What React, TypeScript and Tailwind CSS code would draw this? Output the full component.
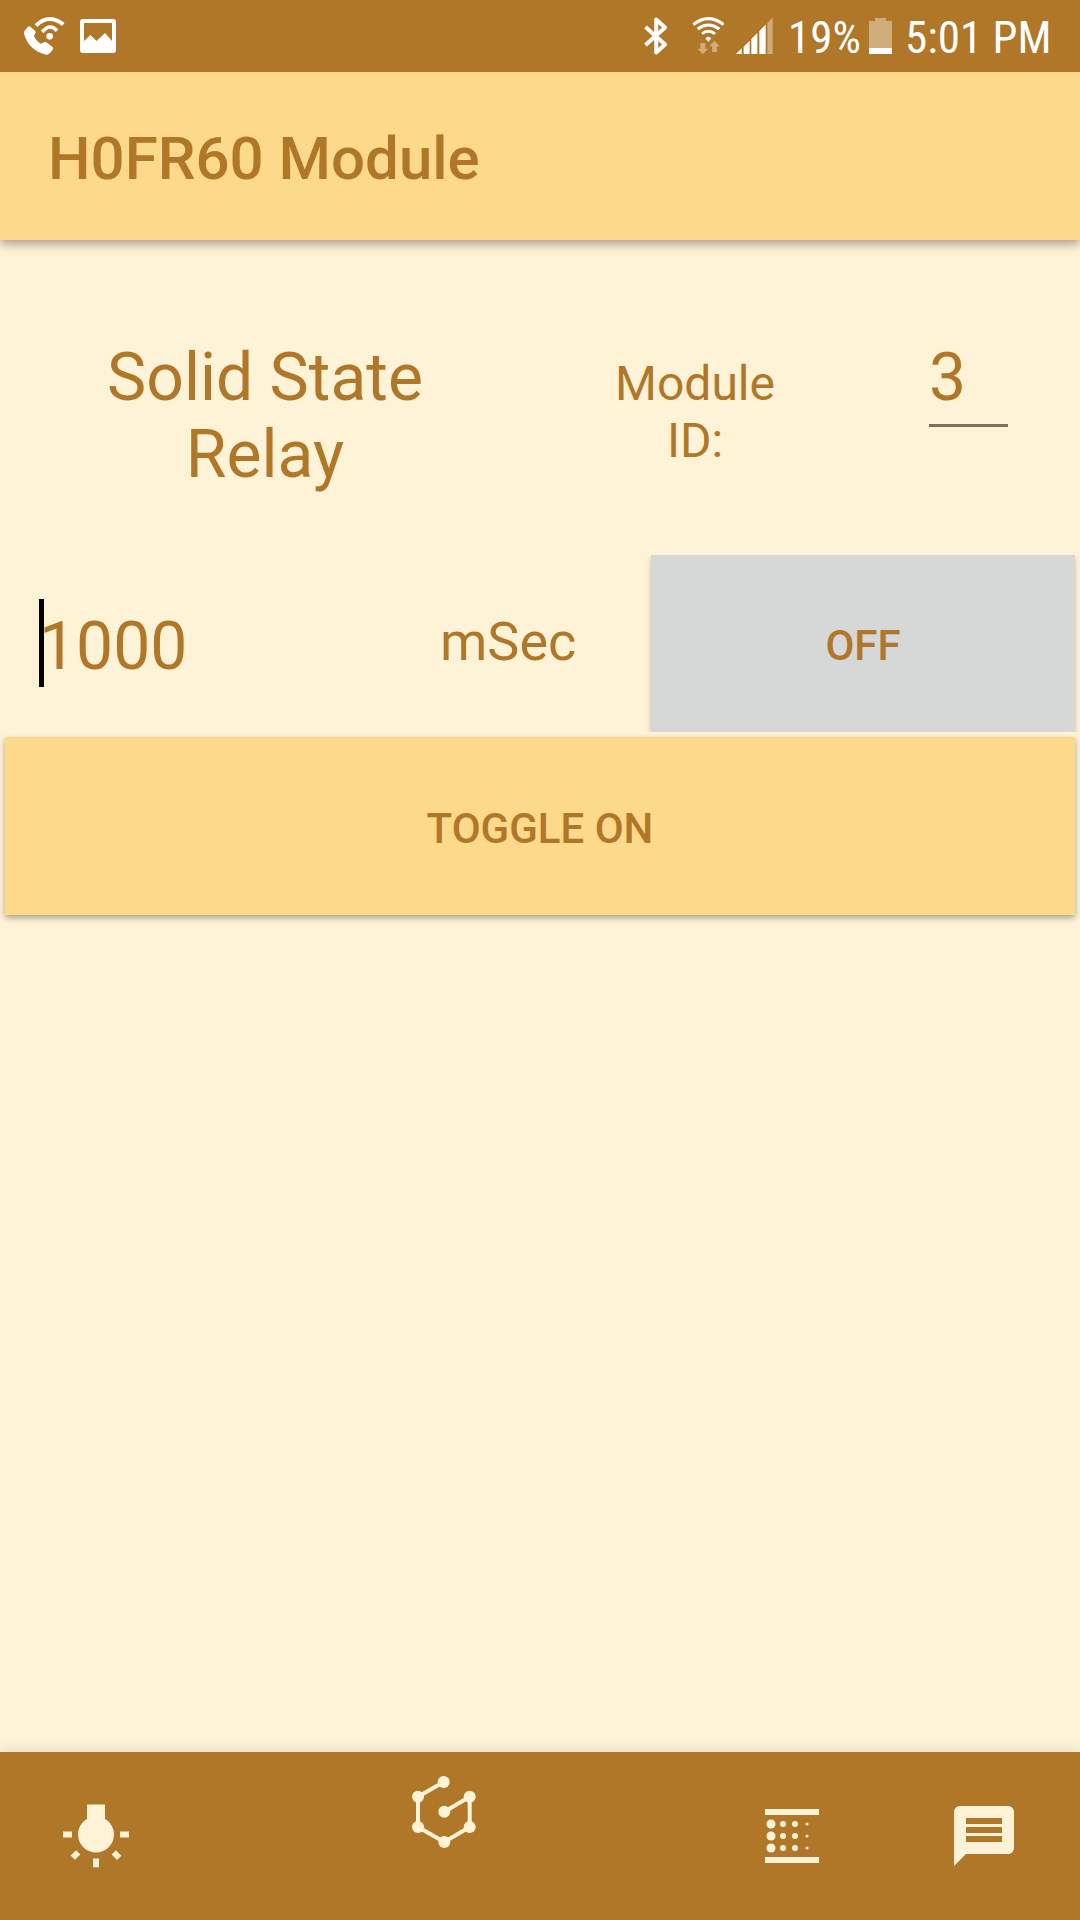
import { MdMessage } from "react-icons/md";

function CallIcon() {
  return (
    <svg className="mt-4 h-10 w-[42px]" viewBox="69 48 126 120" fill="none">
      <path
        d="M72 101 Q71 95 76 89 L84 80 Q88 77 92 81 L105 92 Q109 96 106 100 L102 107 Q107 121 122 131 L132 127 Q137 125 141 128 L157 140 Q162 145 158 149 L150 159 Q143 166 134 163 Q85 148 72 101Z"
        fill="#fff"
      />
      <circle cx="149" cy="109" r="10" fill="#fff" />
      <path d="M127 96 Q149 68 171 92" stroke="#fff" strokeWidth="11" />
      <path d="M108 77 Q145 39 190 73" stroke="#fff" strokeWidth="12" />
    </svg>
  );
}

function PictureIcon() {
  return (
    <svg className="mt-[19px] ml-[15px] h-[34px] w-9" viewBox="0 0 36 34">
      <path
        fillRule="evenodd"
        fill="#fff"
        d="M3 0H33Q36 0 36 3V31Q36 34 33 34H3Q0 34 0 31V3Q0 0 3 0ZM4 4V22L10.5 16L16.5 22L25 14L32 22V4Z"
      />
    </svg>
  );
}

function BluetoothIcon() {
  return (
    <svg className="mt-[17px] h-[38px] w-6" viewBox="0 0 24 38" fill="none">
      <path
        d="M1.5 10L21 27.5L12.2 35.5V2.5L21 10.5L1.5 28"
        stroke="#fff"
        strokeWidth="4"
        strokeLinejoin="round"
      />
    </svg>
  );
}

function WifiIcon() {
  return (
    <svg className="mt-4 ml-6 h-[39px] w-8" viewBox="216 48 96 117" fill="none">
      <path d="M220 74Q265 38 311 74" stroke="#fff" strokeWidth="9" />
      <path d="M233 87Q265 63 298 87" stroke="#fff" strokeWidth="9" />
      <path d="M246 101Q265 87 285 101" stroke="#fff" strokeWidth="9" />
      <path d="M256 115Q265 106 274 115L265 126Z" fill="#fff" />
      <path d="M241 129H256V146H265L248.500 163L232 146H241ZM276 156H291V139H299L283.500 122L267 139H276Z" fill="#d0ac7a" />
    </svg>
  );
}

function SignalIcon() {
  return (
    <svg className="mt-[18px] ml-3 h-9 w-[37px]" viewBox="349 54 111 108">
      <path d="M349 162L366 145V162ZM372 140L390 122V162H372ZM395 117L413 99V162H395ZM419 93L438 74V162H419Z" fill="#fff" />
      <path d="M443 69L459 53V162H443Z" fill="#d0ac7a" />
    </svg>
  );
}

function BatteryIcon() {
  return (
    <svg className="mt-[18px] h-9 w-[23px]" viewBox="0 0 23 36">
      <path d="M6 0H17V3H23V36H0V3H6Z" fill="#d0ac7a" />
      <path d="M0 30H23V36H0Z" fill="#fff" />
    </svg>
  );
}

function StatusBar() {
  return (
    <div className="relative z-10 flex h-[72px] items-start bg-[#b17728] pl-[23px] font-stretch-condensed text-[45px] leading-[75px] whitespace-nowrap text-white">
      <CallIcon />
      <PictureIcon />
      <div className="w-[528px]" />
      <BluetoothIcon />
      <WifiIcon />
      <SignalIcon />
      <span className="ml-[15px] w-[81px]">19%</span>
      <BatteryIcon />
      <span className="ml-[13px]">5:01 PM</span>
    </div>
  );
}

function BulbIcon() {
  return (
    <svg className="size-[72px]" viewBox="0 0 24 24" fill="currentColor">
      <path d="M3.550 18.540l1.410 1.410 1.800-1.790-1.410-1.410-1.800 1.790zM11 22.450h2V19.500h-2v2.950zM4 10.500H1v2h3v-2zm11-4.190V1.500H9v4.810C7.210 7.350 6 9.280 6 11.500c0 3.310 2.690 6 6 6s6-2.690 6-6c0-2.220-1.210-4.150-3-5.190zm5 4.190v2h3v-2h-3zm-2.760 7.660l1.790 1.800 1.410-1.410-1.800-1.790-1.400 1.400z" />
    </svg>
  );
}

const nodes = [
  [35.7, 6],
  [10, 20.7],
  [10, 51],
  [36.3, 66],
  [61.7, 51],
  [61.7, 20.7],
  [36.3, 35.7],
];

function HexagonIcon() {
  return (
    <svg className="size-[72px]" viewBox="0 0 72 72" fill="currentColor">
      <polyline points={nodes.join(" ")} fill="none" stroke="currentColor" strokeWidth="4" />
      {nodes.map(([x, y]) => (
        <circle key={`${x}-${y}`} cx={x} cy={y} r="6" />
      ))}
    </svg>
  );
}

function BlurIcon() {
  return (
    <svg className="size-[72px]" viewBox="0 0 24 24" fill="currentColor">
      <path d="M3 3h18v2H3zM3 19h18v2H3z" />
      {[8, 12, 16].map((y) => (
        <g key={y}>
          <circle cx="5" cy={y} r="1.5" />
          <circle cx="9" cy={y} r="1" />
          <circle cx="13" cy={y} r="1" />
          <circle cx="17" cy={y} r="0.5" />
        </g>
      ))}
    </svg>
  );
}

function BottomNav() {
  return (
    <nav className="flex h-[168px] items-start bg-[#b17728] pt-12 pl-[60px] text-[#fef2d7] shadow-[0_0_14px_rgba(0,0,0,0.12)]">
      <BulbIcon />
      <div className="-mt-6 ml-[276px]">
        <HexagonIcon />
      </div>
      <div className="ml-[276px]">
        <BlurIcon />
      </div>
      <MdMessage className="ml-[120px] size-[72px]" />
    </nav>
  );
}

export default function App() {
  return (
    <div className="flex h-[1920px] w-[1080px] flex-col overflow-hidden bg-[#fef2d7] font-['Roboto',sans-serif] text-[#b17728]">
      <StatusBar />
      <header className="flex h-[168px] items-center bg-[#fdd98b] pt-[5px] pl-12 shadow-[0_4px_10px_rgba(0,0,0,0.35)]">
        <h1 className="text-[60px] leading-[60px] font-medium">H0FR60 Module</h1>
      </header>

      <main className="flex-1">
        <section className="flex h-[315px] items-baseline pt-[99px] text-center">
          <h2 className="w-[530px] px-20 text-[66px] leading-[77px]">Solid State Relay</h2>
          <p className="w-[330px] px-20 text-[48px] leading-[57px]">Module ID:</p>
          <div className="ml-[69px] h-[88px] w-[79px] border-b-3 border-[#7a7061] text-left text-[66px] leading-[77px]">
            3
          </div>
        </section>

        <section className="flex h-[177px] overflow-hidden">
          <div className="flex w-[440px] pt-11 pl-[39px]">
            <div className="h-[88px] w-[5px] bg-black" />
            <span className="-ml-[5px] pt-[9px] text-[66px] leading-[77px]">1000</span>
          </div>
          <span className="w-[211px] pt-[55px] text-[54px] leading-[63px]">mSec</span>
          <button className="h-[177px] w-[424px] bg-[#d6d8d7] pt-[3px] text-[42px] font-medium shadow-[0_3px_6px_rgba(0,0,0,0.2)]">
            OFF
          </button>
        </section>

        <button className="mt-[5px] ml-[5px] h-[178px] w-[1070px] bg-[#fdd98b] pt-1 text-[42px] font-medium shadow-[0_3px_6px_rgba(0,0,0,0.33)]">
          TOGGLE ON
        </button>
      </main>

      <BottomNav />
    </div>
  );
}
